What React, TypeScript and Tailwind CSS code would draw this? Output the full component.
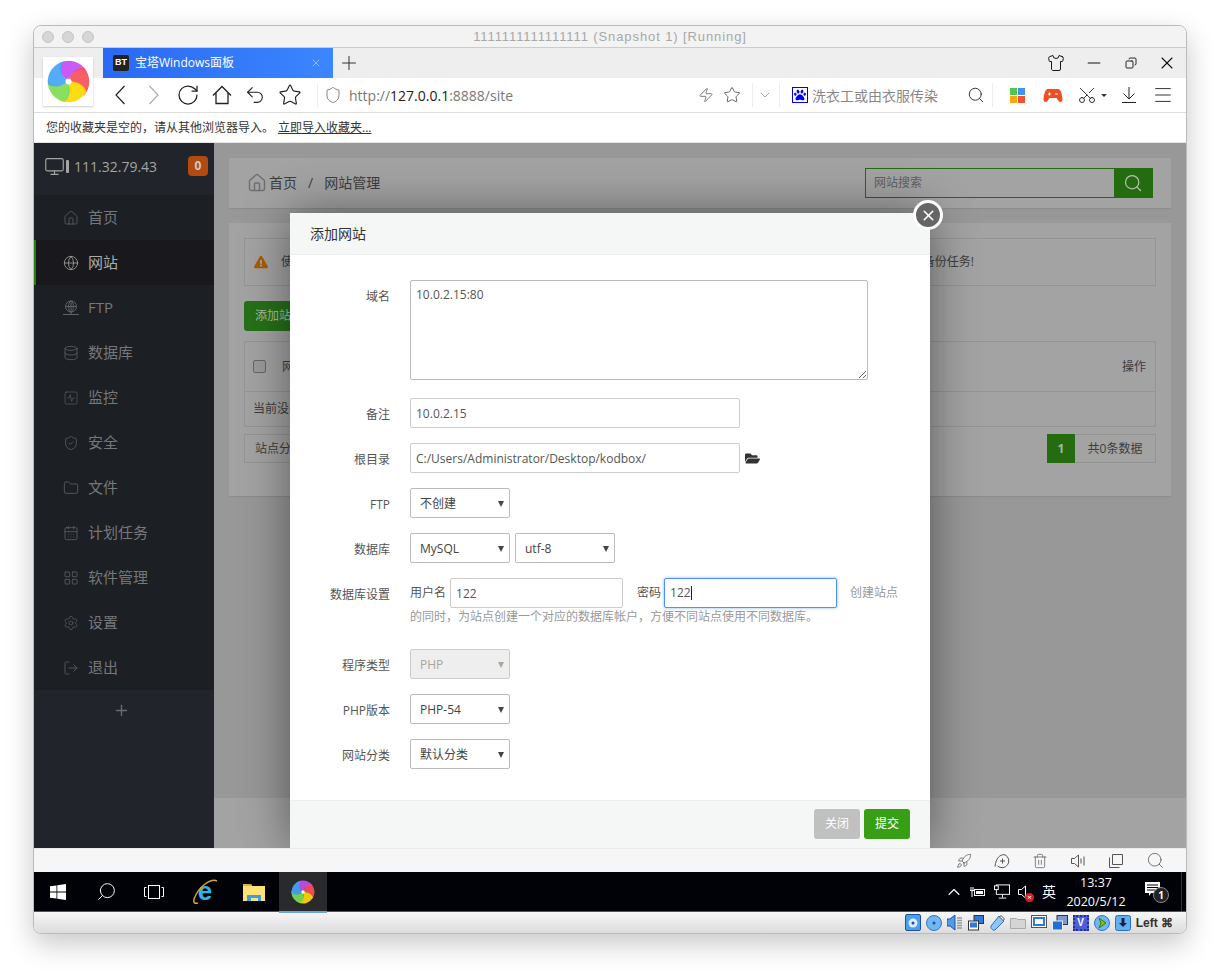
import type { ReactNode } from "react";
import {
  CalendarDays,
  ChevronDown,
  Copy,
  Database,
  Folder,
  Globe,
  Home,
  LayoutGrid,
  LogOut,
  Menu,
  Minus,
  Monitor,
  Plus,
  RotateCw,
  Rocket,
  Scissors,
  Search,
  Settings,
  Shield,
  ShieldCheck,
  Shirt,
  SquareActivity,
  Star,
  Trash2,
  Undo2,
  X,
  Zap,
} from "lucide-react";
import { FaExclamationTriangle, FaFolderOpen, FaPaw } from "react-icons/fa";

const uiFont = "font-['Open_Sans','Noto_Sans_CJK_SC',sans-serif]";

const navItems = [
  { label: "首页", icon: <Home size={16} strokeWidth={1.2} /> },
  { label: "网站", icon: <Globe size={16} strokeWidth={1.2} />, active: true },
  { label: "FTP", icon: <FtpIcon /> },
  { label: "数据库", icon: <Database size={16} strokeWidth={1.2} /> },
  { label: "监控", icon: <SquareActivity size={16} strokeWidth={1} /> },
  { label: "安全", icon: <ShieldCheck size={16} strokeWidth={1.2} /> },
  { label: "文件", icon: <Folder size={16} strokeWidth={1.2} /> },
  { label: "计划任务", icon: <CalendarDays size={16} strokeWidth={1.2} /> },
  { label: "软件管理", icon: <LayoutGrid size={16} strokeWidth={1.2} /> },
  { label: "设置", icon: <Settings size={16} strokeWidth={1} /> },
  { label: "退出", icon: <LogOut size={16} strokeWidth={1.2} /> },
];

function FtpIcon() {
  return (
    <svg width="18" height="16" viewBox="0 0 18 16" fill="none" stroke="currentColor" strokeWidth="1">
      <circle cx="9" cy="6.5" r="5.5" />
      <ellipse cx="9" cy="6.5" rx="2.4" ry="5.5" />
      <path d="M3.5 6.5h11M9 1v13M1 14.5h16" />
    </svg>
  );
}

function Swirl({ size }: { size: number }) {
  const blades = ["#c64cf5", "#f8505a", "#ffd800", "#7fdc55", "#45a5f5"];
  return (
    <svg width={size} height={size} viewBox="0 0 100 100">
      {blades.map((color, i) => (
        <path
          key={color}
          transform={`rotate(${i * 72} 50 50)`}
          d="M50 50C38 42 24 26 30 6.500A48 48 0 0 1 92 26C76 18 56 28 50 50Z"
          fill={color}
          fillOpacity="0.92"
        />
      ))}
      <circle cx="50" cy="50" r="7" fill="#fff" />
    </svg>
  );
}

function TabBar() {
  return (
    <div className="relative flex h-[30px] items-center bg-[#eeeeee]">
      <div className="ml-[69px] flex h-[30px] w-[230px] items-center bg-gradient-to-r from-[#2a69f5] to-[#3b86ff] pl-[10px] text-white">
        <span className="flex h-4 w-4 items-center justify-center rounded-[2px] bg-[#222] font-['Liberation_Sans',sans-serif] text-[9px] font-bold">
          BT
        </span>
        <span className="ml-[6px] text-[12px]">宝塔Windows面板</span>
        <X size={12} strokeWidth={1.2} className="ml-auto mr-[11px] text-[#c8dcff]" />
      </div>
      <Plus size={22} strokeWidth={1.1} className="ml-[5px] text-[#333]" />
      <div className="ml-auto flex items-center text-[#111]">
        <Shirt size={18} strokeWidth={1.3} />
        <Minus size={20} strokeWidth={1.3} className="ml-[19px]" />
        <Copy size={12} strokeWidth={1.8} className="ml-[21px] -scale-x-100" />
        <X size={20} strokeWidth={1.3} className="ml-[20px] mr-[9px]" />
      </div>
    </div>
  );
}

function ToolBar() {
  return (
    <div className="flex h-[35px] items-center border-b border-[#dddddd] bg-white text-[#222]">
      <svg width="12" height="20" viewBox="0 0 12 20" fill="none" stroke="#222" strokeWidth="1.2" className="ml-[80px]">
        <path d="M10.500 1 2 10l8.500 9" />
      </svg>
      <svg width="12" height="20" viewBox="0 0 12 20" fill="none" stroke="#aaa" strokeWidth="1.1" className="ml-[22px]">
        <path d="M1.500 1 10 10l-8.500 9" />
      </svg>
      <RotateCw size={24} strokeWidth={1.25} className="ml-[16px]" />
      <svg width="20" height="20" viewBox="0 0 20 20" fill="none" stroke="#222" strokeWidth="1.3" className="ml-[12px]">
        <path d="M1 10.500 10 1.500l9 9M4 8v10.500h12V8" />
      </svg>
      <Undo2 size={22} strokeWidth={1.2} className="ml-[12px]" />
      <Star size={24} strokeWidth={1.15} className="ml-[12px]" />
      <div className="ml-[15px] h-[24px] w-px bg-[#eeeeee]" />
      <Shield size={18} strokeWidth={1.2} className="ml-[6px] text-[#777]" />
      <div className="ml-[7px] w-[349px] text-[14px] text-[#777]">
        http://<span className="text-[#222]">127.0.0.1</span>:8888/site
      </div>
      <Zap size={16} strokeWidth={1.3} className="text-[#666]" />
      <Star size={18} strokeWidth={1.2} className="ml-[9px] text-[#555]" />
      <div className="ml-[11px] h-[24px] w-px bg-[#eeeeee]" />
      <ChevronDown size={16} strokeWidth={1} className="ml-[4px] text-[#777]" />
      <div className="ml-[6px] h-[24px] w-px bg-[#eeeeee]" />
      <span className="ml-[12px] flex h-4 w-4 items-center justify-center border border-[#0000ee] text-[#0000ee]">
        <FaPaw size={12} />
      </span>
      <span className="ml-[4px] w-[155px] text-[14px] text-[#888]">洗衣工或由衣服传染</span>
      <Search size={18} strokeWidth={1.3} className="text-[#333]" />
      <div className="ml-[7px] h-[24px] w-px bg-[#eeeeee]" />
      <span className="ml-[17px] grid h-[15px] w-[15px] grid-cols-2 gap-px">
        <i className="bg-[#4cc94c]" />
        <i className="bg-[#3f94f2]" />
        <i className="bg-[#fda50f]" />
        <i className="bg-[#f0522f]" />
      </span>
      <svg width="20" height="15" viewBox="0 0 20 15" className="ml-[18px]">
        <path d="M5 1h10c3 0 4 6 4.500 10c.3 3-2.500 4-4 2l-2-3H6.500l-2 3c-1.500 2-4.300 1-4-2C1 7 2 1 5 1Z" fill="#f04e23" />
        <path d="M5 6h3M6.500 4.500v3M12 6h3" stroke="#fff" strokeWidth="1.100" />
      </svg>
      <Scissors size={20} strokeWidth={1.1} className="ml-[14px] -rotate-90" />
      <span className="ml-[4px] h-0 w-0 border-x-[3px] border-t-[3px] border-x-transparent border-t-[#333]" />
      <svg width="16" height="16" viewBox="0 0 16 16" fill="none" stroke="#222" strokeWidth="1" className="ml-[14px]">
        <path d="M8 0v12M2.500 6.500 8 12l5.500-5.500M1 15.500h14" />
      </svg>
      <Menu size={22} strokeWidth={1} className="ml-[15px]" />
    </div>
  );
}

function Sidebar() {
  return (
    <aside className="w-[180px] shrink-0 bg-[#21242a]">
      <div className="flex h-[52px] items-center pb-[6px] pl-[10px] pr-[6px] text-[#a5a5a5]">
        <Monitor size={21} strokeWidth={1.3} />
        <span className="ml-px h-[13px] w-[3px] rounded-[1px] bg-[#a5a5a5]" />
        <span className="ml-[5px] text-[14px]">111.32.79.43</span>
        <span className="ml-auto flex h-5 w-5 items-center justify-center rounded-[4px] bg-[#b34a10] text-[12px] font-bold text-[#c9c9c9]">
          0
        </span>
      </div>
      <nav className="bg-[#1c1f24]">
        {navItems.map(({ label, icon, active }) => (
          <div
            key={label}
            className={
              active
                ? "flex h-[45px] items-center border-l-2 border-[#2b7a12] bg-[#19191d] pl-[26px] text-[#a3a3a3]"
                : "flex h-[45px] items-center pl-[28px] text-[#5f6267]"
            }
          >
            <span className="flex w-[18px] justify-center">{icon}</span>
            <span className={active ? "ml-[8px] text-[15px] text-[#aaaaaa]" : "ml-[8px] text-[15px] text-[#75777b]"}>
              {label}
            </span>
          </div>
        ))}
      </nav>
      <div className="flex h-[41px] items-center justify-center pr-[5px] text-[#686b70]">
        <Plus size={17} strokeWidth={2} />
      </div>
    </aside>
  );
}

function Background() {
  return (
    <main className="flex min-w-0 flex-1 flex-col bg-[#989898] text-[#3d3d3d]">
      <div className="flex-1 px-[15px] pt-[15px]">
        <div className="flex h-[50px] items-center bg-[#a3a3a3] pb-[1px] pl-[18px] pr-[18px] text-[14px] shadow-[0_1px_1px_#8c8c8c]">
          <Home size={20} strokeWidth={1.7} className="text-[#6f6f6f]" />
          <span className="ml-[2px]">首页</span>
          <span className="ml-[11px]">/</span>
          <span className="ml-[11px]">网站管理</span>
          <div className="ml-auto flex h-[30px] w-[288px] border border-[#256b10]">
            <span className="flex flex-1 items-center pl-[8px] text-[12px] text-[#5f5f5f]">网站搜索</span>
            <span className="flex w-[38px] items-center justify-center bg-[#256b10] text-[#b5c2af]">
              <Search size={20} strokeWidth={1.5} />
            </span>
          </div>
        </div>
        <div className="mt-[15px] h-[273px] bg-[#a3a3a3] px-[15px] pt-[15px] text-[12px] shadow-[0_1px_1px_#8c8c8c]">
          <div className="flex h-[48px] items-center border border-[#949494] pl-[9px] pr-[181px]">
            <FaExclamationTriangle size={14} className="text-[#a85d00]" />
            <span className="ml-[13px]">使用</span>
            <span className="ml-auto">备份任务!</span>
          </div>
          <div className="mt-[15px] flex h-[30px] w-[70px] items-center justify-center rounded-[3px] bg-[#27701a] text-[#a9c0a0]">
            添加站点
          </div>
          <div className="mt-[10px] flex h-[51px] items-center border border-[#949494] pl-[8px] pr-[9px]">
            <span className="h-[13px] w-[13px] rounded-[2px] border border-[#666] bg-[#9a9a9a]" />
            <span className="ml-[16px]">网站名</span>
            <span className="ml-auto">操作</span>
          </div>
          <div className="flex h-[35px] items-center border-x border-b border-[#949494] pl-[8px]">当前没有站点数据</div>
          <div className="mt-[7px] flex h-[29px] items-stretch">
            <div className="flex w-[120px] items-center border border-[#949494] pl-[10px]">站点分类</div>
            <div className="ml-auto flex w-[28px] items-center justify-center bg-[#256b10] font-bold text-[#a9b8a3]">1</div>
            <div className="flex w-[81px] items-center justify-center border border-l-0 border-[#949494]">共0条数据</div>
          </div>
        </div>
      </div>
      <div className="h-[50px] bg-[#a3a3a3]" />
    </main>
  );
}

function Row({ label, className, children }: { label: string; className?: string; children: ReactNode }) {
  return (
    <div className={`flex ${className ?? "mb-[15px]"}`}>
      <label className="w-[120px] shrink-0 pr-[20px] pt-[9px] text-right leading-[16px] text-[#555]">{label}</label>
      {children}
    </div>
  );
}

const inputClass = "h-[30px] rounded-[2px] border border-[#cccccc] bg-white px-[5px] text-[12px] text-[#555] outline-none";

function Select({ value, disabled, className }: { value: string; disabled?: boolean; className?: string }) {
  return (
    <div
      className={
        disabled
          ? `flex h-[30px] w-[100px] items-center justify-between rounded-[2px] border border-[#cccccc] bg-[#eeeeee] pl-[9px] pr-[5px] pt-[1px] text-[#a9a79a] ${className ?? ""}`
          : `flex h-[30px] w-[100px] items-center justify-between rounded-[2px] border border-[#bbbbbb] bg-white pl-[9px] pr-[5px] pt-[1px] text-[#444] ${className ?? ""}`
      }
    >
      {value}
      <span className="h-0 w-0 border-x-[3.5px] border-t-[6px] border-x-transparent border-t-current" />
    </div>
  );
}

function SiteDialog() {
  return (
    <div className="absolute left-[256px] top-[70px] h-[635px] w-[640px] bg-white text-[12px] shadow-[0_0_45px_rgba(0,0,0,0.45)]">
      <div className="flex h-[42px] items-center border-b border-[#eeeeee] bg-[#f5f6f6] pl-[20px] text-[14px] text-[#333]">添加网站</div>
      <div className="relative h-[545px] pt-[25px]">
        <Row label="域名" className="mb-[18px]">
          <textarea
            readOnly
            defaultValue="10.0.2.15:80"
            className="h-[100px] w-[458px] rounded-[2px] border border-[#bbbbbb] px-[5px] py-[4px] text-[12px] leading-[20px] text-[#555] outline-none"
          />
        </Row>
        <Row label="备注">
          <input readOnly defaultValue="10.0.2.15" className={`${inputClass} w-[330px]`} />
        </Row>
        <Row label="根目录">
          <input readOnly defaultValue="C:/Users/Administrator/Desktop/kodbox/" className={`${inputClass} w-[330px]`} />
          <FaFolderOpen size={15} className="ml-[5px] mt-[8px] text-[#333]" />
        </Row>
        <Row label="FTP">
          <Select value="不创建" />
        </Row>
        <Row label="数据库">
          <Select value="MySQL" />
          <Select value="utf-8" className="ml-[5px]" />
        </Row>
        <Row label="数据库设置" className="mb-[23px]">
          <div className="w-[495px] text-[#999]">
            <div className="flex h-[30px] items-center">
              <span className="text-[#555]">用户名</span>
              <input readOnly defaultValue="122" className={`${inputClass} ml-[4px] w-[173px]`} />
              <span className="ml-[14px] text-[#555]">密码</span>
              <span className="ml-[3px] flex h-[30px] w-[173px] items-center rounded-[2px] border border-[#4d90fe] pl-[5px] text-[#555] shadow-[0_0_3px_#7fb0ff]">
                122
                <span className="h-[14px] w-px bg-[#222]" />
              </span>
              <span className="ml-[13px]">创建站点</span>
            </div>
            <div className="leading-[18px]">的同时，为站点创建一个对应的数据库帐户，方便不同站点使用不同数据库。</div>
          </div>
        </Row>
        <Row label="程序类型">
          <Select value="PHP" disabled />
        </Row>
        <Row label="PHP版本">
          <Select value="PHP-54" />
        </Row>
        <Row label="网站分类">
          <Select value="默认分类" />
        </Row>
      </div>
      <div className="flex h-[48px] items-start justify-end gap-[4px] border-t border-[#eeeeee] bg-[#f5f6f6] pr-[20px] pt-[8px]">
        <button className="h-[30px] w-[46px] rounded-[3px] bg-[#c0c0c0] text-white">关闭</button>
        <button className="h-[30px] w-[46px] rounded-[3px] bg-[#389e16] text-white">提交</button>
      </div>
      <button className="absolute -right-[13px] -top-[13px] flex h-[30px] w-[30px] items-center justify-center rounded-full border-[3px] border-white bg-[#666666] text-white">
        <X size={17} strokeWidth={2.2} />
      </button>
    </div>
  );
}

function WindowsLogo() {
  return (
    <svg width="16" height="16" viewBox="0 0 16 16" fill="#fff">
      <path d="M0 2.300 6.500 1.400v6.200H0ZM7.300 1.300 16 0v7.600H7.300ZM0 8.400h6.500v6.200L0 13.700ZM7.300 8.400H16V16l-8.700-1.300Z" />
    </svg>
  );
}

function Taskbar() {
  return (
    <div className="flex h-[40px] items-center border-b border-[#555] bg-[#000208] text-white">
      <span className="ml-[16px]">
        <WindowsLogo />
      </span>
      <Search size={21} strokeWidth={1.1} className="ml-[30px] -scale-x-100" />
      <svg width="20" height="14" viewBox="0 0 20 14" fill="none" stroke="#fff" className="ml-[27px]">
        <rect x="4.500" y=".5" width="11" height="13" />
        <path d="M2.500 2.500H.5v9h2M17.500 2.500h2v9h-2" />
      </svg>
      <svg width="28" height="32" viewBox="0 0 28 32" className="ml-[27px]">
        <text x="14" y="24" textAnchor="middle" fontFamily="Liberation Sans" fontWeight="700" fontSize="26" fill="#36b3ec">e</text>
        <path d="M26 5C20 2 8 10 3 23C2 27 4 28 7 27" fill="none" stroke="#d9a91f" strokeWidth="1.500" />
      </svg>
      <svg width="22" height="18" viewBox="0 0 22 18" className="ml-[24px]">
        <path d="M0 1h8l1 2h13v15H0Z" fill="#fde275" />
        <path d="M0 1h8l1 2H0Z" fill="#e2b23a" />
        <path d="M4 18v-6h14v6h-3v-3H8v3Z" fill="#3f9fdc" />
      </svg>
      <div className="relative ml-[14px] flex h-[40px] w-[48px] items-center justify-center bg-[#2a2a2c]">
        <Swirl size={24} />
        <span className="absolute bottom-[-1px] left-0 h-[2px] w-full bg-[#6aa3e0]" />
      </div>
      <div className="ml-auto flex h-full items-center">
        <ChevronDown size={20} strokeWidth={1.3} className="rotate-180" />
        <svg width="16" height="12" viewBox="0 0 16 12" fill="none" stroke="#fff" className="ml-[6px]">
          <rect x="4.500" y="3.500" width="10" height="6" />
          <rect x="6" y="5" width="7" height="3" fill="#fff" stroke="none" />
          <path d="M3 1v3M1 1v3M0 4.500h4M2 5v6" />
        </svg>
        <svg width="16" height="15" viewBox="0 0 17 15" fill="none" stroke="#fff" className="ml-[8px]">
          <rect x="2.500" y=".5" width="14" height="10" />
          <path d="M9 11v3M5 14.500h8" />
          <rect x=".5" y="1.500" width="4" height="4" fill="#000" />
        </svg>
        <span className="relative ml-[8px] flex w-[16px]">
          <svg width="9" height="14" viewBox="0 0 9 14" fill="none" stroke="#fff">
            <path d="M.5 4.500h3l4-3.500v12l-4-3.500h-3Z" />
          </svg>
          <span className="absolute -bottom-[3px] left-[7px] flex h-[9px] w-[9px] items-center justify-center rounded-full bg-[#d81e2b] text-[8px] leading-none">×</span>
        </span>
        <span className="ml-[8px] w-[16px] text-[14px]">英</span>
        <div className="ml-[2px] w-[72px] pt-[1px] text-center font-['Open_Sans',sans-serif] text-[12.5px] leading-[19px]">
          <div>13:37</div>
          <div>2020/5/12</div>
        </div>
        <span className="relative ml-[13px] mr-[21px] flex">
          <svg width="15" height="15" viewBox="0 0 15 15" className="-mt-[4px]">
            <path d="M0 0h15v11H6l-2 3v-3H0Z" fill="#fff" />
            <path d="M2 3h11M2 5.500h11M2 8h8" stroke="#000" />
          </svg>
          <span className="absolute -bottom-[6px] left-[8px] flex h-[16px] w-[16px] items-center justify-center rounded-full border border-[#888] bg-[#222] font-['Open_Sans',sans-serif] text-[10px] font-bold leading-none">1</span>
        </span>
        <span className="mr-[4px] h-full w-px bg-[#333]" />
      </div>
    </div>
  );
}

function StatusBar() {
  return (
    <div className="flex h-[21px] items-center justify-end gap-[5px] rounded-b-[8px] bg-gradient-to-b from-[#f7f7f7] to-[#dcdcdc] pr-[13px]">
      <svg width="16" height="17" viewBox="0 0 16 17"><rect width="15" height="16" x=".5" y=".5" rx="1.500" fill="#4d9ee8" stroke="#1d4fa8" /><circle cx="8" cy="9" r="4.500" fill="#d8ecfb" /><circle cx="8" cy="9" r="1.500" fill="#1d4fa8" /></svg>
      <svg width="16" height="16" viewBox="0 0 16 16"><circle cx="8" cy="8" r="7.500" fill="#6fb7f2" stroke="#3573c9" /><circle cx="8" cy="8" r="1.500" fill="#1d4fa8" /></svg>
      <svg width="16" height="17" viewBox="0 0 16 17"><path d="M0 5h3l5-4v15l-5-4H0Z" fill="#4d9ee8" stroke="#1d4fa8" /><path d="M10 4h5M10 6.500h5M10 9h5M10 11.500h5M10 14h5" stroke="#999" strokeWidth="1.500" /></svg>
      <svg width="16" height="16" viewBox="0 0 16 16"><rect x="6" y=".5" width="9.500" height="8" fill="#2f7ad8" stroke="#333" /><rect x=".5" y="6" width="10" height="9" fill="#fff" stroke="#333" /><rect x="2" y="7.500" width="7" height="5" fill="#2f7ad8" /></svg>
      <svg width="16" height="16" viewBox="0 0 16 16"><path d="M10 1l5 5L6 15c-2 1-5-2-4-4Z" fill="#8fc4f5" stroke="#2b6fc9" /><path d="M10.500 2 12 .5l3.500 3.500L14 5.500Z" fill="#eee" stroke="#555" /></svg>
      <svg width="16" height="13" viewBox="0 0 16 13"><path d="M.5 2.500h6l1 1h8v9H.5Z" fill="#d5d5d5" stroke="#aaa" /></svg>
      <svg width="16" height="16" viewBox="0 0 16 16"><rect x=".5" y=".5" width="15" height="12" fill="#fff" stroke="#555" /><rect x="3" y="3" width="10" height="7" fill="#fff" stroke="#2b7bd8" strokeWidth="2" /></svg>
      <svg width="16" height="16" viewBox="0 0 16 16"><rect x="5" y=".5" width="10.500" height="9" fill="#7a9ad6" stroke="#333" /><rect x=".5" y="6" width="10" height="9" fill="#1f6fd8" stroke="#eee" /></svg>
      <span className="flex h-[16px] w-[16px] items-center justify-center border-2 border-dotted border-[#2230a0] bg-[#4c5ed8] font-['Liberation_Sans',sans-serif] text-[10px] font-bold text-white">V</span>
      <svg width="16" height="16" viewBox="0 0 16 16"><circle cx="8" cy="8" r="7.500" fill="#6fb7f2" stroke="#3573c9" /><path d="M5 3l7 5-7 5 2-5Z" fill="#7ac414" stroke="#3d7a0a" /></svg>
      <svg width="16" height="16" viewBox="0 0 16 16"><rect x=".5" y=".5" width="15" height="15" rx="2" fill="#5fb2ef" stroke="#2b6fc9" /><path d="M6.500 3h3v5h2.500L8 12 4 8h2.500Z" fill="#16234d" /></svg>
      <span className="font-['Liberation_Sans',sans-serif] text-[12px] font-bold text-[#333]">Left ⌘</span>
    </div>
  );
}

function ActionBar() {
  return (
    <div className="flex h-[24px] items-center justify-end gap-[22px] border-t border-[#e8e8e8] bg-[#f6f6f6] pr-[23px] text-[#555]">
      <Rocket size={16} strokeWidth={1.1} />
      <svg width="16" height="16" viewBox="0 0 16 16" fill="none" stroke="currentColor">
        <path d="M11 1.800A6.800 6.800 0 1 1 3.500 13M11 1.800C6 1 2 5 1 13.500M8.500 5.500v5M6 8h5" />
      </svg>
      <Trash2 size={16} strokeWidth={1.1} />
      <svg width="16" height="16" viewBox="0 0 16 16" fill="none" stroke="currentColor">
        <path d="M1.500 5.500h3l4-3.500v12l-4-3.500h-3ZM11 5.500v5M14 3.500v9" />
      </svg>
      <svg width="16" height="16" viewBox="0 0 16 16" fill="none" stroke="currentColor">
        <path d="M4.500 1.500h10v10h-10ZM1.500 4.500v10h10" />
      </svg>
      <Search size={19} strokeWidth={1} className="-mr-[2px]" />
    </div>
  );
}

export default function App() {
  return (
    <div className={`${uiFont} h-[975px] w-[1220px] overflow-hidden bg-white pl-[33px] pt-[25px]`}>
      <div className="relative flex h-[909px] w-[1154px] flex-col rounded-[8px] border border-[#bbbbbb] bg-white shadow-[0_10px_28px_rgba(0,0,0,0.22)]">
        <div className="relative flex h-[22px] items-center rounded-t-[8px] border-b border-[#cccccc] bg-[#f3f3f3] pl-[8px]">
          <span className="h-[12px] w-[12px] rounded-full border border-[#c4c4c4] bg-[#d6d6d6]" />
          <span className="ml-[8px] h-[12px] w-[12px] rounded-full border border-[#c4c4c4] bg-[#d6d6d6]" />
          <span className="ml-[8px] h-[12px] w-[12px] rounded-full border border-[#c4c4c4] bg-[#d6d6d6]" />
          <span className="flex-1 pr-[60px] text-center font-['Liberation_Sans',sans-serif] text-[13px] tracking-[0.9px] text-[#a8a8a8]">
            1111111111111111 (Snapshot 1) [Running]
          </span>
        </div>
        <TabBar />
        <ToolBar />
        <div className="flex h-[30px] items-center border-b border-[#e4e4e4] bg-white pl-[12px] text-[12px] text-[#333]">
          您的收藏夹是空的，请从其他浏览器导入。
          <a className="ml-[4px] underline">立即导入收藏夹...</a>
        </div>
        <div className="absolute left-[9px] top-[31px] flex h-[49px] w-[50px] items-center justify-center bg-white shadow-[0_1px_2px_rgba(0,0,0,0.2)]">
          <Swirl size={43} />
        </div>

        <div className="relative flex h-[705px] overflow-hidden">
          <Sidebar />
          <Background />
          <SiteDialog />
        </div>

        <ActionBar />
        <Taskbar />
        <StatusBar />
      </div>
    </div>
  );
}
